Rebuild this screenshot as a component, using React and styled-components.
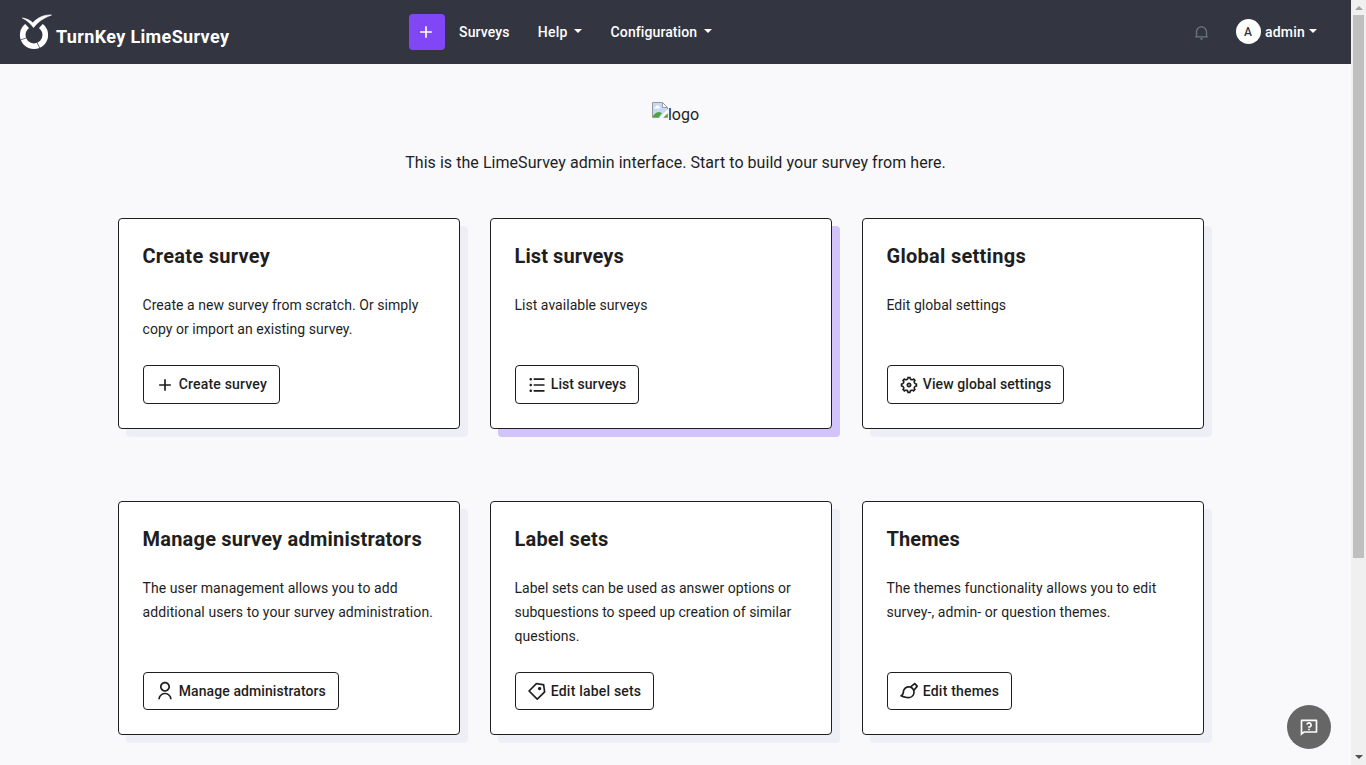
import React from 'react';
import styled, { createGlobalStyle } from 'styled-components';
import {
  RiAddLine, RiListUnordered, RiSettings5Line, RiUserLine, RiPriceTag3Line,
  RiBrushLine, RiNotification2Line, RiQuestionnaireLine,
} from 'react-icons/ri';

const GlobalStyle = createGlobalStyle`
  * { box-sizing: border-box; }
  html, body, #root { height: 100%; margin: 0; overflow: hidden; }
  body { background: #f9f9fb; color: #1e1e1e; font: 14px/24px Roboto, "Liberation Sans", sans-serif; }
`;

const Shell = styled.div`
  display: flex;
  height: 765px;
  overflow: hidden;
`;
const Page = styled.div`
  width: 1351px;
  height: 765px;
  overflow: hidden;
  background: #f9f9fb;
`;

const Header = styled.header`
  display: flex;
  height: 64px;
  background: #333641;
  color: #fff;
  font-weight: 500;
`;
const Brand = styled.div`
  display: flex;
  width: 409px;
  padding: 12px 0 0 18px;
  font: 700 18px/24px Roboto, sans-serif;
  letter-spacing: 0.35px;
  white-space: nowrap;
`;
const BrandName = styled.span`
  margin: 13px 0 0 2px;
`;
const AddButton = styled.button`
  display: flex;
  align-items: center;
  justify-content: center;
  width: 36px;
  height: 36px;
  margin: 14px 14px 0 0;
  padding: 0 2px 0 0;
  border: 0;
  border-radius: 4px;
  background: #8146f6;
  color: #fff;
`;
const NavItem = styled.div`
  display: flex;
  align-items: center;
  height: 24px;
  margin: 20px ${(p) => p.$after}px 0 0;
  letter-spacing: ${(p) => p.$track}px;
`;
const Caret = styled.span`
  margin: -3px 0 0 ${(p) => p.$gap}px;
  border: 4px solid transparent;
  border-top-color: #fff;
  border-bottom-width: 0;
`;
const Account = styled.div`
  display: flex;
  height: 64px;
  margin-left: auto;
  padding-right: 34px;
`;
const Bell = styled(RiNotification2Line)`
  width: 15px;
  height: 15px;
  margin: 25px 27px 0 0;
  color: #6c7681;
`;
const Avatar = styled.div`
  width: 25px;
  height: 25px;
  margin: 19px 4.5px 0 0;
  border-radius: 50%;
  background: #fff;
  color: #333641;
  font-size: 12px;
  line-height: 26px;
  text-align: center;
`;

const Welcome = styled.section`
  display: flex;
  flex-direction: column;
  align-items: center;
  height: 154px;
  padding-top: 38px;
  font-size: 16px;
`;
const MissingImage = styled.div`
  display: flex;
  height: 24px;
  margin-bottom: 25px;
  line-height: 26px;
`;
const Intro = styled.p`
  margin: 0;
  letter-spacing: 0.05px;
`;

const Cards = styled.main`
  display: grid;
  grid-template-columns: repeat(3, 342px);
  grid-template-rows: 211px 234px;
  gap: 72px 30px;
  padding-left: 118px;
`;
const CardBox = styled.article`
  display: flex;
  flex-direction: column;
  align-items: flex-start;
  padding: 24px 0 24px 24px;
  border: 1px solid #1e1e1e;
  border-radius: 4px;
  background: #fff;
  box-shadow: 8px 8px 0 ${(p) => (p.$active ? '#d2c4f9' : '#eeeef7')};
`;
const CardTitle = styled.h2`
  margin: 1px 0 25px -0.5px;
  font: 700 20px/24px Roboto, sans-serif;
  letter-spacing: ${(p) => p.$track}px;
`;
const CardText = styled.p`
  margin: 0 0 0 -0.5px;
  letter-spacing: ${(p) => p.$track}px;
  white-space: pre-line;
`;
const CardButton = styled.button`
  display: flex;
  align-items: center;
  gap: 3.8px;
  width: ${(p) => p.$width}px;
  height: ${(p) => p.$height}px;
  margin-top: auto;
  padding: 0 0 ${(p) => p.$height - 38}px 11px;
  border: 1px solid #1e1e1e;
  border-radius: 4px;
  background: #fff;
  color: #1e1e1e;
  font: 500 14px/20px Roboto, sans-serif;
  letter-spacing: ${(p) => p.$track}px;
  white-space: nowrap;
  svg { flex: none; margin-top: ${(p) => (p.$height - 38) * 2}px; }
`;
const HelpButton = styled.button`
  position: fixed;
  left: 1287px;
  top: 705px;
  display: flex;
  align-items: center;
  justify-content: center;
  width: 44px;
  height: 44px;
  padding: 0;
  border: 0;
  border-radius: 50%;
  background: #666;
  color: #fff;
`;

const ScrollTrack = styled.div`
  display: flex;
  flex-direction: column;
  align-items: center;
  width: 15px;
  height: 765px;
  padding: 6px 0;
  background: #f0f0f0;
`;
const ScrollThumb = styled.div`
  width: 11px;
  height: 543px;
  margin-top: 5px;
  background: #c0c0c0;
`;
const ScrollArrow = styled.div`
  border: 4px solid transparent;
  ${(p) => (p.$up
    ? 'border-top-width: 0; border-bottom-color: #a3a3a3;'
    : 'border-bottom-width: 0; border-top-color: #505050; margin-top: auto;')}
`;

function Logo() {
  return (
    <svg width="36" height="40" viewBox="0 0 36 40" fill="none">
      <circle cx="16" cy="23" r="11.3" stroke="#fff" strokeWidth="5.6" />
      <path d="M16 21.5 5 9.500 16-2 27 9.500z" fill="#333641" />
      <path d="M1 28.500 8 26M19 30.500l3.500 7" stroke="#333641" strokeWidth="0.700" />
      <path d="M4.300 6C8.500 6.500 12 8.200 14.800 10.800C20 5.400 26 2.500 33.500 3C26.500 5.500 20 9.500 15.500 15.600C12.500 11.500 8.500 7.800 4.300 6z" fill="#fff" stroke="#fff" strokeWidth="0.600" />
    </svg>
  );
}

function BrokenImage() {
  return (
    <svg width="16" height="16" viewBox="0 0 16 16">
      <path d="M.5.500h10l5 5v10H.5z" fill="#c6d9f7" stroke="#9b9b9b" />
      <path d="M2 6.500q0-1.500 1.500-1.500.5-2 2-1.500 2 0 2 2 1 0 1 1z" fill="#fff" />
      <path d="M1 15v-1q3-4 6-4l3 1-3 4z" fill="#4aa63d" />
      <path d="m7 16 9-9v4l-5 5z" fill="#fff" />
      <path d="m12 15 3-3v3z" fill="#4aa63d" />
      <path d="M10.500.500v5h5z" fill="#fff" stroke="#9b9b9b" />
    </svg>
  );
}

const CARDS = [
  { title: 'Create survey', titleTrack: 0.28, textTrack: 0.05, text: 'Create a new survey from scratch. Or simply\ncopy or import an existing survey.', action: 'Create survey', icon: RiAddLine, width: 137, height: 39, track: 0.18 },
  { title: 'List surveys', titleTrack: 0.1, textTrack: 0.03, text: 'List available surveys', action: 'List surveys', icon: RiListUnordered, width: 124, height: 39, track: 0.05, active: true },
  { title: 'Global settings', titleTrack: 0.28, textTrack: 0.04, text: 'Edit global settings', action: 'View global settings', icon: RiSettings5Line, width: 177, height: 39, track: 0.1 },
  { title: 'Manage survey administrators', titleTrack: 0.22, textTrack: 0.08, text: 'The user management allows you to add\nadditional users to your survey administration.', action: 'Manage administrators', icon: RiUserLine, width: 196, height: 38, track: 0.08 },
  { title: 'Label sets', titleTrack: 0.2, textTrack: 0.01, text: 'Label sets can be used as answer options or\nsubquestions to speed up creation of similar\nquestions.', action: 'Edit label sets', icon: RiPriceTag3Line, width: 139, height: 38, track: 0.2 },
  { title: 'Themes', titleTrack: 0.1, textTrack: 0.09, text: 'The themes functionality allows you to edit\nsurvey-, admin- or question themes.', action: 'Edit themes', icon: RiBrushLine, width: 125, height: 38, track: 0.2 },
];

function Card({ title, titleTrack, text, textTrack, action, icon: Icon, width, height, track, active }) {
  return (
    <CardBox $active={active}>
      <CardTitle $track={titleTrack}>{title}</CardTitle>
      <CardText $track={textTrack}>{text}</CardText>
      <CardButton $width={width} $height={height} $track={track}>
        <Icon size={20} />
        {action}
      </CardButton>
    </CardBox>
  );
}

export default function App() {
  return (
    <Shell>
      <GlobalStyle />
      <Page>
        <Header>
          <Brand><Logo /><BrandName>TurnKey LimeSurvey</BrandName></Brand>
          <AddButton><RiAddLine size={20} /></AddButton>
          <NavItem $after={28} $track={0.15}>Surveys</NavItem>
          <NavItem $after={29} $track={0.25}>Help<Caret $gap={6} /></NavItem>
          <NavItem $after={0} $track={0.1}>Configuration<Caret $gap={7} /></NavItem>
          <Account>
            <Bell />
            <Avatar>A</Avatar>
            <NavItem $after={0} $track={0.2}>admin<Caret $gap={4} /></NavItem>
          </Account>
        </Header>
        <Welcome>
          <MissingImage><BrokenImage />logo</MissingImage>
          <Intro>This is the LimeSurvey admin interface. Start to build your survey from here.</Intro>
        </Welcome>
        <Cards>
          {CARDS.map((card) => <Card key={card.title} {...card} />)}
        </Cards>
        <HelpButton><RiQuestionnaireLine size={20} /></HelpButton>
      </Page>
      <ScrollTrack>
        <ScrollArrow $up />
        <ScrollThumb />
        <ScrollArrow />
      </ScrollTrack>
    </Shell>
  );
}
